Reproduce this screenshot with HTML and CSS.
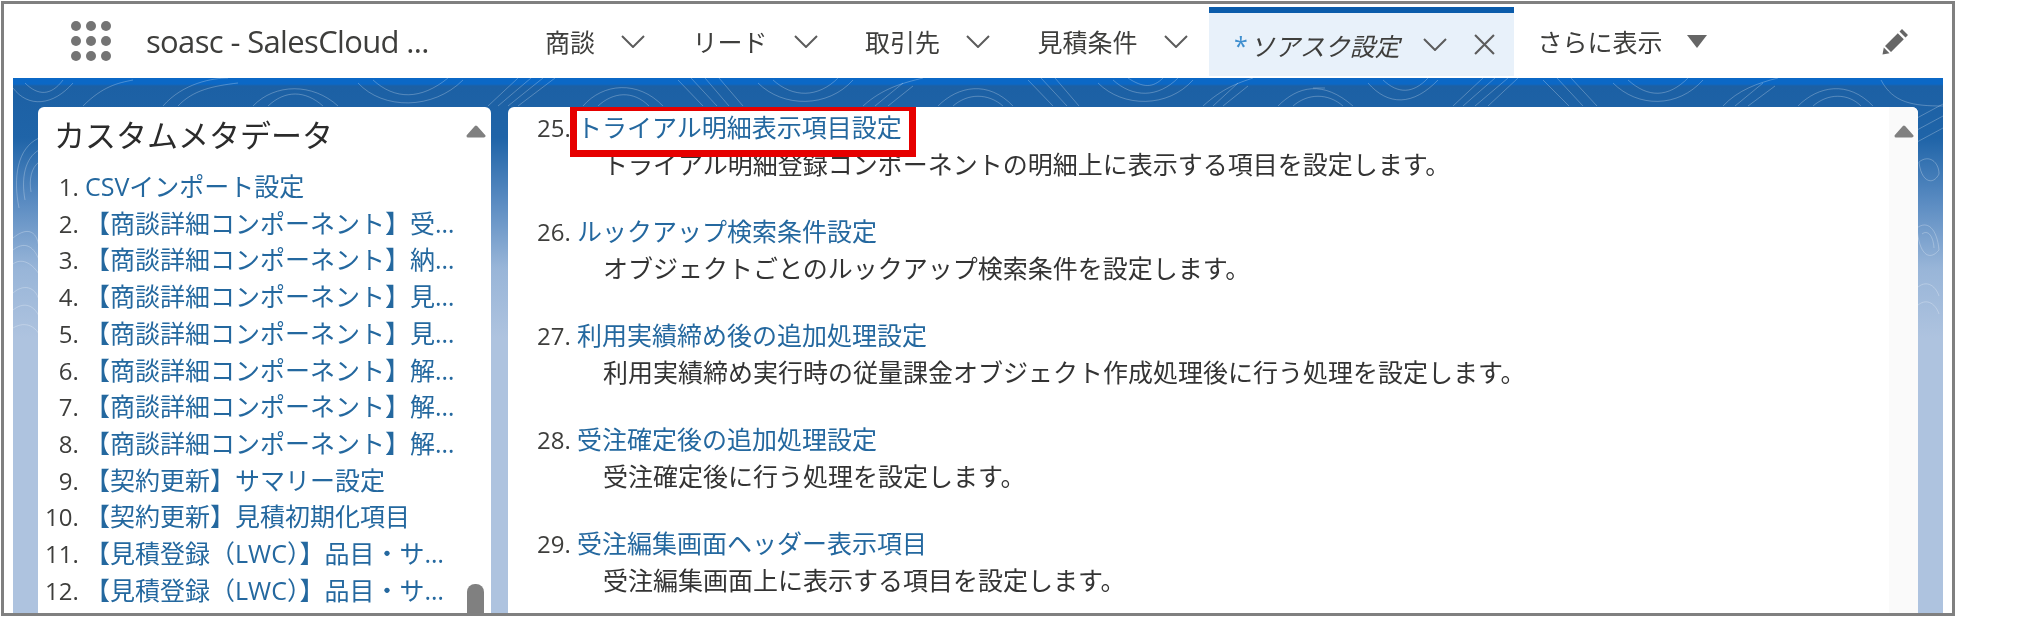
FILE: index.html
```html
<!DOCTYPE html>
<html lang="ja">
<head>
    <meta charset="UTF-8">
    <title>soasc - SalesCloud</title>
    <link rel="stylesheet" href="styles.css">
</head>
<body>
<div class="frame">
    <header class="topbar">
        <div class="launcher">
            <span></span><span></span><span></span>
            <span></span><span></span><span></span>
            <span></span><span></span><span></span>
        </div>
        <div class="brand">soasc - SalesCloud ...</div>
        <nav class="tabs">
            <div class="tab"><span>商談</span><svg class="chev" viewBox="0 0 24 13"><path d="M1 1l11 11L23 1"/></svg></div>
            <div class="tab"><span>リード</span><svg class="chev" viewBox="0 0 24 13"><path d="M1 1l11 11L23 1"/></svg></div>
            <div class="tab"><span>取引先</span><svg class="chev" viewBox="0 0 24 13"><path d="M1 1l11 11L23 1"/></svg></div>
            <div class="tab"><span>見積条件</span><svg class="chev" viewBox="0 0 24 13"><path d="M1 1l11 11L23 1"/></svg></div>
            <div class="tab active">
                <span class="star">*</span><span class="tab-name">ソアスク設定</span>
                <svg class="chev" viewBox="0 0 24 13"><path d="M1 1l11 11L23 1"/></svg>
                <svg class="close" viewBox="0 0 20 20"><path d="M1 1l18 18M19 1L1 19"/></svg>
            </div>
            <div class="tab more"><span>さらに表示</span><svg class="caret" viewBox="0 0 20 13"><path d="M0 0h20L10 13z"/></svg></div>
        </nav>
        <svg class="pencil" viewBox="0 0 28 28"><path d="M20 2l6 6-2.500 2.500-6-6zM15.800 6.200l6 6L9 25l-6-6zM1.800 20.500l5.700 5.700L0.500 27.500z"/></svg>
    </header>

    <main class="stage">
        <svg class="topo" viewBox="0 0 1930 300">
            <g>
                <path d="M0 10C15 30 40 28 60 5M12 5C25 18 38 18 50 2M70 28C90 8 105 5 120 2"/>
                <path d="M150 28C170 5 200 0 215 0M165 28C180 12 200 8 225 5"/>
                <path d="M240 28C262 5 300 5 325 28M255 28C272 12 292 12 310 28"/>
                <path d="M345 5C370 32 420 32 450 2M360 2C382 22 408 22 435 0"/>
                <path d="M475 28L505 0M485 28L518 0M495 28L530 0M505 28L542 0"/>
                <path d="M570 28C590 5 625 2 650 28M585 28C600 14 620 12 636 28"/>
                <path d="M665 2L690 28M678 0L704 28M692 0L716 28M706 0L730 28"/>
                <path d="M745 5C770 30 815 30 840 2M760 2C780 20 805 20 825 0"/>
                <path d="M850 28C870 10 890 5 910 0M862 28L890 5M875 28L900 8"/>
                <path d="M925 28C945 8 975 2 1000 28M940 28C955 15 975 15 990 28"/>
                <path d="M1015 2L1040 28M1028 0L1054 28M1042 0L1066 28"/>
                <path d="M1085 5C1110 30 1155 30 1180 2M1100 2C1120 20 1145 20 1165 0M1115 0C1130 10 1140 10 1150 0"/>
                <path d="M1190 28C1210 10 1225 5 1240 0M1200 28L1225 5M1210 28L1235 8"/>
                <path d="M1265 28C1285 8 1310 2 1340 28M1280 28C1295 15 1315 15 1330 28M1300 10L1312 10"/>
                <path d="M1355 5C1375 28 1400 28 1425 2M1370 2C1385 16 1400 16 1415 0"/>
                <path d="M1440 28L1470 0M1450 28L1482 0M1462 28L1495 0M1475 28L1505 0"/>
                <path d="M1530 2L1556 28M1544 0L1570 28M1558 0L1584 28"/>
                <path d="M1600 5C1625 30 1665 30 1690 2M1615 2C1635 20 1655 20 1675 0"/>
                <path d="M1710 28C1725 12 1745 5 1765 0M1722 28L1750 5M1735 28L1762 8"/>
                <path d="M1785 28C1805 8 1835 2 1860 28M1800 28C1815 15 1835 15 1848 28"/>
                <path d="M1868 2C1880 25 1900 28 1930 28"/>
                <path d="M26 60C4 70 0 100 6 130M26 72C12 80 8 100 12 122M26 84C18 90 16 102 18 114"/>
                <path d="M0 160C12 150 24 150 26 170M0 172C10 164 20 166 26 182M0 186C8 180 18 184 26 196"/>
                <path d="M0 215C10 206 22 208 26 222M0 232C10 224 20 226 26 238M0 250C10 244 20 246 26 256"/>
                <path d="M1904 40L1930 26M1904 52L1930 38M1904 64L1930 50"/>
                <path d="M1906 84C1916 76 1926 84 1926 96C1920 108 1908 104 1906 84"/>
                <path d="M1904 150C1914 142 1924 150 1926 172C1916 184 1906 176 1904 150M1909 156C1914 152 1920 156 1921 170"/>
                <path d="M1904 210C1912 202 1922 206 1926 218M1904 228C1912 220 1922 224 1926 236"/>
            </g>
        </svg>
        <aside class="card side">
            <div class="side-head">
                <h2>カスタムメタデータ</h2>
                <svg class="arrow-up" viewBox="0 0 20 13"><path d="M10 2L18 11H2z"/></svg>
            </div>
            <ol class="side-list">
                <li><a>CSVインポート設定</a></li>
                <li><a>【商談詳細コンポーネント】受注明細設定</a></li>
                <li><a>【商談詳細コンポーネント】納品明細設定</a></li>
                <li><a>【商談詳細コンポーネント】見積明細設定</a></li>
                <li><a>【商談詳細コンポーネント】見積条件設定</a></li>
                <li><a>【商談詳細コンポーネント】解約明細設定</a></li>
                <li><a>【商談詳細コンポーネント】解約条件設定</a></li>
                <li><a>【商談詳細コンポーネント】解約処理設定</a></li>
                <li><a>【契約更新】サマリー設定</a></li>
                <li><a>【契約更新】見積初期化項目</a></li>
                <li><a>【見積登録（LWC）】品目・サービス設定</a></li>
                <li><a>【見積登録（LWC）】品目・サービス表示</a></li>
            </ol>
            <div class="thumb"></div>
        </aside>
        <section class="card content">
            <ol class="doc-list" start="25">
                <li><a>トライアル明細表示項目設定</a><p>トライアル明細登録コンポーネントの明細上に表示する項目を設定します。</p></li>
                <li><a>ルックアップ検索条件設定</a><p>オブジェクトごとのルックアップ検索条件を設定します。</p></li>
                <li><a>利用実績締め後の追加処理設定</a><p>利用実績締め実行時の従量課金オブジェクト作成処理後に行う処理を設定します。</p></li>
                <li><a>受注確定後の追加処理設定</a><p>受注確定後に行う処理を設定します。</p></li>
                <li><a>受注編集画面ヘッダー表示項目</a><p>受注編集画面上に表示する項目を設定します。</p></li>
            </ol>
            <div class="track"><svg class="arrow-up" viewBox="0 0 20 13"><path d="M10 2L18 11H2z"/></svg></div>
            <div class="callout"></div>
        </section>
    </main>
</div>
</body>
</html>
```

FILE: styles.css
```css
html, body {
    margin: 0;
    background: #fff;
}
body {
    height: 624px;
    overflow: hidden;
    font-family: "Open Sans", "Noto Sans CJK JP", sans-serif;
    font-size: 25px;
    color: #3e3e3c;
}
.frame {
    width: 1954px;
    height: 615px;
    margin: 1px 0 0 1px;
    box-sizing: border-box;
    border: 3px solid #808080;
    display: flex;
    flex-direction: column;
    overflow: hidden;
    filter: blur(0.45px);
}

/* top nav */
.topbar {
    height: 74px;
    flex: none;
    display: flex;
    align-items: center;
    background: #fff;
}
.launcher {
    width: 41px;
    margin-left: 67px;
    display: grid;
    grid-template-columns: repeat(3, 10px);
    gap: 5px;
}
.launcher span {
    height: 10px;
    border-radius: 50%;
    background: #747474;
}
.brand {
    margin-left: 34px;
    width: 289px;
    font-size: 31px;
    letter-spacing: -0.65px;
    white-space: nowrap;
}
.tabs {
    display: flex;
    align-self: stretch;
    margin-left: 110px;
}
.tab {
    display: flex;
    align-items: center;
    margin-right: 47.500px;
    white-space: nowrap;
}
.chev {
    width: 24px;
    height: 13px;
    margin-left: 26px;
    fill: none;
    stroke: #5c5c5c;
    stroke-width: 2;
}
.tab.active {
    margin: 3px 0 2px -26.500px;
    padding: 0 0 0 25.500px;
    width: 279.500px;
    background: #e8f1fa;
    border-top: 6px solid #0b5cab;
}
.star {
    margin-right: 2px;
    color: #3f8fcf;
}
.tab-name {
    font-style: italic;
}
.active .chev {
    margin-left: 23px;
}
.close {
    width: 21px;
    height: 21px;
    margin-left: 27px;
    fill: none;
    stroke: #5c5c5c;
    stroke-width: 2;
}
.tab.more {
    margin-left: 24px;
    margin-right: 0;
}
.caret {
    width: 20px;
    height: 13px;
    margin-left: 24px;
    fill: #666;
}
.pencil {
    width: 28px;
    height: 28px;
    margin-left: auto;
    margin-right: 42px;
    fill: #666;
}

/* blue area */
.stage {
    flex: 1;
    position: relative;
    display: flex;
    gap: 17px;
    min-height: 0;
    margin: 0 9px 0 9px;
    padding: 29px 25px 0 25px;
    background: linear-gradient(#0b68c6 0, #0b68c6 6px, #1c60a4 8px, #1f64a8 60px, #5b8cc2 125px, #98b5d8 190px, #aec3df 260px);
}
.topo {
    position: absolute;
    top: 0;
    left: 0;
    width: 1930px;
    height: 300px;
    fill: none;
    stroke: rgba(255, 255, 255, 0.26);
    stroke-width: 1;
}
.card {
    position: relative;
    background: #fff;
    border-radius: 6px 6px 0 0;
}
.side {
    width: 453px;
    flex: none;
    overflow: hidden;
}
.side-head {
    height: 61px;
    padding: 0 0 8px 16px;
    box-sizing: border-box;
    display: flex;
    align-items: center;
    justify-content: space-between;
}
.side-head h2 {
    margin: 0;
    font-size: 31px;
    font-weight: 400;
    color: #2b2b2b;
}
.arrow-up {
    flex: none;
    width: 20px;
    height: 13px;
    fill: #808080;
    stroke: #808080;
    stroke-width: 3;
    stroke-linejoin: round;
}
.side-head .arrow-up {
    align-self: flex-start;
    margin: 18px 5px 0 0;
}
a {
    color: #24689f;
}
li::marker {
    font-size: 24px;
}
.side-list {
    margin: 0;
    padding: 0 34px 0 47px;
    line-height: 36.7px;
}
.side-list a {
    display: block;
    overflow: hidden;
    white-space: nowrap;
    text-overflow: ellipsis;
}
.thumb {
    position: absolute;
    right: 7px;
    bottom: 0;
    width: 17px;
    height: 29px;
    background: #808080;
    border-radius: 8px 8px 0 0;
}
.content {
    flex: 1;
    display: flex;
    overflow: hidden;
}
.doc-list {
    flex: 1;
    margin: 0;
    padding: 2px 0 0 69px;
    line-height: 36.5px;
}
.doc-list li {
    margin-bottom: 31px;
}
.doc-list p {
    margin: 0 0 0 26px;
    color: #333;
}
.track {
    width: 29px;
    background: #fafafa;
    display: flex;
    justify-content: center;
    padding-top: 18px;
    box-sizing: border-box;
}
.callout {
    position: absolute;
    left: 62px;
    top: -3px;
    width: 346px;
    height: 53px;
    box-sizing: border-box;
    border: 7px solid #e60000;
}
```
